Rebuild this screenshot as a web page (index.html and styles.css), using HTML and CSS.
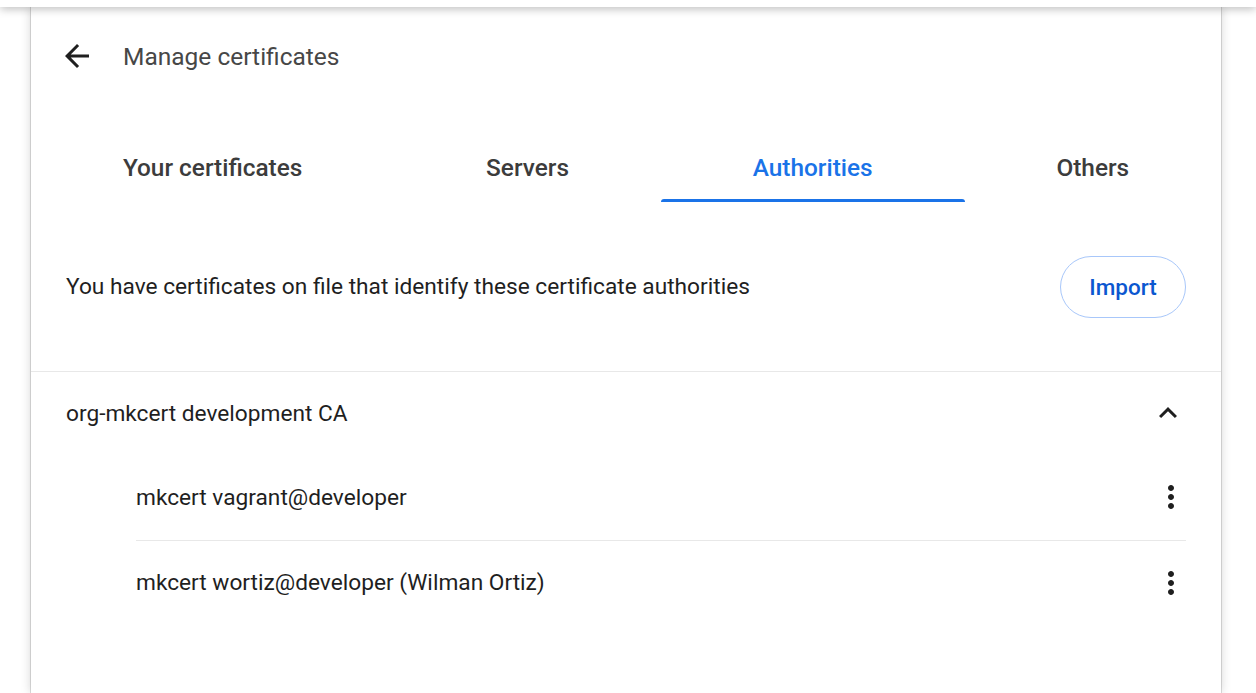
FILE: index.html
```html
<!DOCTYPE html>
<html>
<head>
<meta charset="utf-8">
<link rel="stylesheet" href="styles.css">
</head>
<body>
<div class="topbar"></div>
<div class="card">
  <div class="header">
    <div class="icon-btn back">
      <svg width="36" height="36" viewBox="0 0 24 24"><path d="M20 11H7.83l5.59-5.59L12 4l-8 8 8 8 1.41-1.41L7.83 13H20v-2z" fill="#1f1f1f"/></svg>
    </div>
    <h1 class="title">Manage certificates</h1>
  </div>
  <div class="tabs">
    <div class="tab"><span class="tab-label">Your certificates</span><span class="tab-ind"></span></div>
    <div class="tab"><span class="tab-label">Servers</span><span class="tab-ind"></span></div>
    <div class="tab active"><span class="tab-label">Authorities</span><span class="tab-ind"></span></div>
    <div class="tab"><span class="tab-label">Others</span><span class="tab-ind"></span></div>
  </div>
  <div class="desc-row">
    <span class="desc">You have certificates on file that identify these certificate authorities</span>
    <button class="import">Import</button>
  </div>
  <div class="sep"></div>
  <div class="group-row">
    <span class="group-name">org-mkcert development CA</span>
    <div class="icon-btn chevron">
      <svg width="36" height="36" viewBox="0 0 24 24"><path d="M12 8l-6 6 1.41 1.41L12 10.83l4.59 4.58L18 14z" fill="#1f1f1f"/></svg>
    </div>
  </div>
  <div class="children">
    <div class="child-row first">
      <span class="child-name">mkcert vagrant@developer</span>
      <div class="icon-btn kebab">
        <svg width="36" height="36" viewBox="0 0 24 24"><path d="M12 8c1.1 0 2-.9 2-2s-.9-2-2-2-2 .9-2 2 .9 2 2 2zm0 2c-1.1 0-2 .9-2 2s.9 2 2 2 2-.9 2-2-.9-2-2-2zm0 6c-1.1 0-2 .9-2 2s.9 2 2 2 2-.9 2-2-.9-2-2-2z" fill="#1f1f1f"/></svg>
      </div>
    </div>
    <div class="child-sep"></div>
    <div class="child-row">
      <span class="child-name">mkcert wortiz@developer (Wilman Ortiz)</span>
      <div class="icon-btn kebab">
        <svg width="36" height="36" viewBox="0 0 24 24"><path d="M12 8c1.1 0 2-.9 2-2s-.9-2-2-2-2 .9-2 2 .9 2 2 2zm0 2c-1.1 0-2 .9-2 2s.9 2 2 2 2-.9 2-2-.9-2-2-2zm0 6c-1.1 0-2 .9-2 2s.9 2 2 2 2-.9 2-2-.9-2-2-2z" fill="#1f1f1f"/></svg>
      </div>
    </div>
  </div>
</div>
</body>
</html>
```
FILE: styles.css
```css
html, body {
  margin: 0;
  padding: 0;
  background: #ffffff;
  height: 100%;
  overflow: hidden;
}
body {
  font-family: Roboto, "Liberation Sans", sans-serif;
  color: #1f1f1f;
  position: relative;
}
.topbar {
  height: 7px;
  background: #ffffff;
  box-shadow: 0 1px 10px rgba(0, 0, 0, 0.35);
  position: relative;
  z-index: 2;
}
.card {
  margin-left: 31px;
  width: 1190px;
  height: 686px;
  background: #ffffff;
  box-shadow: 0 0 0 1px rgba(0, 0, 0, 0.12), 0 0 10px rgba(0, 0, 0, 0.18);
  display: flex;
  flex-direction: column;
  position: relative;
  z-index: 1;
}
.header {
  height: 98px;
  display: flex;
  align-items: center;
  padding-left: 28px;
}
.icon-btn {
  width: 36px;
  height: 36px;
  display: flex;
  align-items: center;
  justify-content: center;
  flex: none;
}
.icon-btn svg { display: block; }
.title {
  margin: 0 0 0 28px;
  font-size: 24.5px;
  font-weight: 400;
  color: #474747;
}
.tabs {
  margin-top: 30px;
  height: 67px;
  display: flex;
}
.tab {
  flex: 1 1 auto;
  display: flex;
  flex-direction: column;
  align-items: center;
}
.tab-label {
  flex: 1;
  display: flex;
  align-items: center;
  font-size: 24.4px;
  font-weight: 500;
  color: #3c3c3c;
}
.tab-ind {
  height: 3px;
  width: 100%;
  border-radius: 3px 3px 0 0;
}
.tab.active .tab-label { color: #1a73e8; }
.tab.active .tab-ind { background: #1a73e8; }
.desc-row {
  height: 169px;
  display: flex;
  align-items: center;
  justify-content: space-between;
  padding: 0 35px;
}
.desc {
  font-size: 22.7px;
  color: #1f1f1f;
}
.import {
  width: 126px;
  height: 62px;
  border: 1px solid #a8c7fa;
  border-radius: 31px;
  background: #ffffff;
  color: #0b57d0;
  font-family: Roboto, "Liberation Sans", sans-serif;
  font-size: 22.5px;
  font-weight: 500;
  padding: 0;
}
.sep {
  height: 1px;
  background: #e8e8e8;
}
.group-row {
  height: 82px;
  display: flex;
  align-items: center;
  justify-content: space-between;
  padding: 0 35px;
}
.group-name { font-size: 22.7px; }
.children {
  padding: 0 35px 0 105px;
}
.child-row {
  height: 83px;
  display: flex;
  align-items: center;
  justify-content: space-between;
}
.child-row.first { height: 86px; }
.child-name { font-size: 22.7px; }
.kebab { margin-right: -3px; }
.child-sep {
  height: 1px;
  background: #e8e8e8;
}
```
